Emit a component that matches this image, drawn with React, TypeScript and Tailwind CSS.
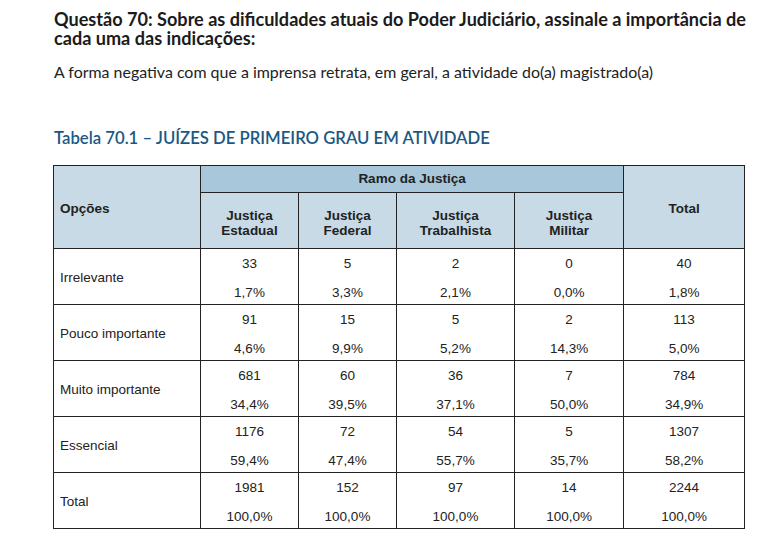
import React from "react";

const rows = [
  { label: "Irrelevante", vals: [["33", "1,7%"], ["5", "3,3%"], ["2", "2,1%"], ["0", "0,0%"], ["40", "1,8%"]] },
  { label: "Pouco importante", vals: [["91", "4,6%"], ["15", "9,9%"], ["5", "5,2%"], ["2", "14,3%"], ["113", "5,0%"]] },
  { label: "Muito importante", vals: [["681", "34,4%"], ["60", "39,5%"], ["36", "37,1%"], ["7", "50,0%"], ["784", "34,9%"]] },
  { label: "Essencial", vals: [["1176", "59,4%"], ["72", "47,4%"], ["54", "55,7%"], ["5", "35,7%"], ["1307", "58,2%"]] },
  { label: "Total", vals: [["1981", "100,0%"], ["152", "100,0%"], ["97", "100,0%"], ["14", "100,0%"], ["2244", "100,0%"]] },
];

const subHeads = [
  ["Justiça", "Estadual"],
  ["Justiça", "Federal"],
  ["Justiça", "Trabalhista"],
  ["Justiça", "Militar"],
];

export default function App() {
  return (
    <div className="w-[770px] h-[546px] bg-white overflow-hidden pl-[54px] pt-[10px] font-['Lato','Noto_Sans',sans-serif]">
      <h1 className="text-[18.1px] font-bold leading-[19px] text-[#1b1b1b] w-[700px]">
        Questão 70: Sobre as dificuldades atuais do Poder Judiciário, assinale a importância de cada uma das indicações:
      </h1>
      <p className="mt-[15px] text-[15.95px] leading-[18px] text-[#222]">
        A forma negativa com que a imprensa retrata, em geral, a atividade do(a) magistrado(a)
      </p>
      <h2 className="mt-[47px] text-[16.7px] font-semibold leading-[20px] text-[#1d5883]">
        Tabela 70.1 – JUÍZES DE PRIMEIRO GRAU EM ATIVIDADE
      </h2>
      <table className="mt-[17px] -ml-px w-[691px] table-fixed border-collapse text-[13.5px] text-[#222] font-['Liberation_Sans',Arial,sans-serif]">
        <colgroup>
          <col className="w-[147px]" />
          <col className="w-[98px]" />
          <col className="w-[98px]" />
          <col className="w-[118px]" />
          <col className="w-[109px]" />
          <col className="w-[121px]" />
        </colgroup>
        <thead>
          <tr className="h-[27px]">
            <th rowSpan={2} className="border border-[#222] bg-[#c8dae6] text-left font-bold pl-[6px] pt-[4px] align-middle">
              Opções
            </th>
            <th colSpan={4} className="border border-[#222] bg-[#a8c7da] font-bold text-center align-middle">
              Ramo da Justiça
            </th>
            <th rowSpan={2} className="border border-[#222] bg-[#c8dae6] font-bold text-center pt-[4px] align-middle">
              Total
            </th>
          </tr>
          <tr className="h-[56px]">
            {subHeads.map((h, i) => (
              <th key={i} className="border border-[#222] bg-[#c8dae6] font-bold text-center align-middle leading-[15px] pt-[4px]">
                {h[0]}
                <br />
                {h[1]}
              </th>
            ))}
          </tr>
        </thead>
        <tbody>
          {rows.map((r) => (
            <tr key={r.label} className="h-[56px]">
              <td className="border border-[#222] pl-[6px] pt-[4px] align-middle">{r.label}</td>
              {r.vals.map((v, i) => (
                <td key={i} className="border border-[#222] text-center align-top p-0">
                  <div className="flex flex-col items-center pt-[7px] leading-[16px]">
                    <span>{v[0]}</span>
                    <span className="mt-[13px]">{v[1]}</span>
                  </div>
                </td>
              ))}
            </tr>
          ))}
        </tbody>
      </table>
    </div>
  );
}
